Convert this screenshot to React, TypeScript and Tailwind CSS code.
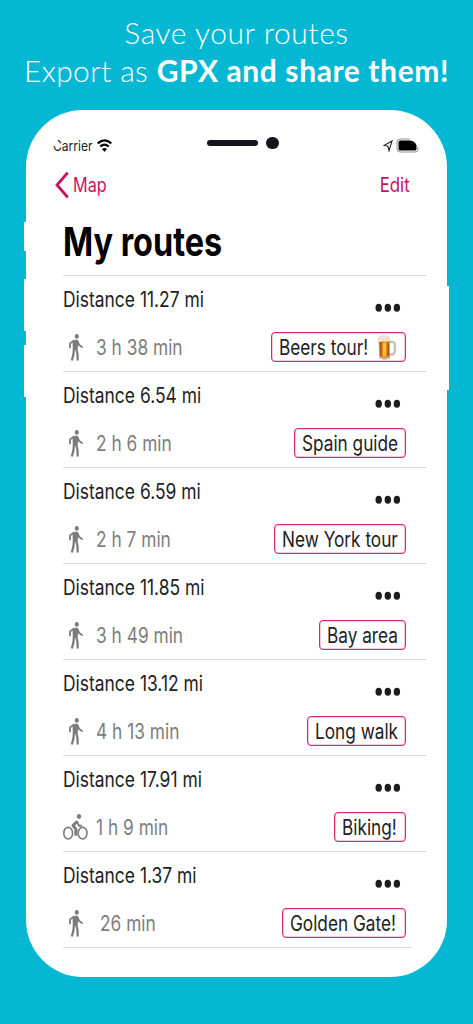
import { clsx } from 'clsx'

type Route = {
  distance: string
  time: string
  name: string
  mode: 'walk' | 'bike'
  timeClass: string
  tagWidth: string
}

const routes: Route[] = [
  { distance: '11.27', time: '3 h 38 min', name: 'Beers tour!', mode: 'walk', timeClass: 'ml-[33px]', tagWidth: 'w-[135px]' },
  { distance: '6.54', time: '2 h 6 min', name: 'Spain guide', mode: 'walk', timeClass: 'ml-[33px]', tagWidth: 'w-[112px]' },
  { distance: '6.59', time: '2 h 7 min', name: 'New York tour', mode: 'walk', timeClass: 'ml-[33px]', tagWidth: 'w-[132px]' },
  { distance: '11.85', time: '3 h 49 min', name: 'Bay area', mode: 'walk', timeClass: 'ml-[33px]', tagWidth: 'w-[87px]' },
  { distance: '13.12', time: '4 h 13 min', name: 'Long walk', mode: 'walk', timeClass: 'ml-[33px]', tagWidth: 'w-[99px]' },
  { distance: '17.91', time: '1 h 9 min', name: 'Biking!', mode: 'bike', timeClass: 'ml-[33px]', tagWidth: 'w-[72px]' },
  { distance: '1.37', time: '26 min', name: 'Golden Gate!', mode: 'walk', timeClass: 'ml-[37px]', tagWidth: 'w-[124px]' },
]

function WalkIcon() {
  return (
    <svg viewBox="0 0 15 27" className="ml-[5px] h-[27px] w-[15px] shrink-0">
      <ellipse cx="8.8" cy="2.4" rx="2.1" ry="2.3" fill="#7d7d7d" />
      <path d="M4.6 6.300 9 5.500l1.400 1.500-.7 8.500H4.800Z" fill="#7d7d7d" />
      <g fill="none" stroke="#7d7d7d" strokeLinejoin="round">
        <path d="M5.500 7 2.100 9.200l-.3 5" strokeWidth="1.800" />
        <path d="m9.300 7 1.900 4 3.400 2.600" strokeWidth="1.800" />
        <path d="m6 14.500-.6 6L3.900 26.500" strokeWidth="2.300" />
        <path d="m8 14.500 1.400 4.500.3 7.500" strokeWidth="2.300" />
      </g>
    </svg>
  )
}

function BikeIcon() {
  return (
    <svg viewBox="0 0 25 26" className="h-[26px] w-[25px] shrink-0">
      <g fill="none" stroke="#7d7d7d" strokeLinejoin="round">
        <ellipse cx="5.2" cy="19.2" rx="4.4" ry="5.8" strokeWidth="1.6" />
        <ellipse cx="19.6" cy="19.2" rx="4.4" ry="5.8" strokeWidth="1.6" />
        <path d="m14.300 7.200-4.300 4.300 3 3.900-.2 6.300" strokeWidth="3" />
        <path d="m14 7.600 2 4.200h3.200" strokeWidth="2" />
      </g>
      <ellipse cx="16" cy="2.5" rx="2.2" ry="2.4" fill="#7d7d7d" />
    </svg>
  )
}

function BeerIcon() {
  return (
    <svg viewBox="0 0 20 27" className="h-[27px] w-[20px] shrink-0">
      <path d="M12 8h3.500q2.500 0 2.300 3v6q0 3-3 3.500h-3" fill="none" stroke="#c9c3b6" strokeWidth="2.4" />
      <path d="M1.500 5h11l.5 18q-5 3-10.500 0Z" fill="#e18b16" />
      <path d="M3 8h1.500v14H3zM10.500 9H12v13h-1.500z" fill="#a65310" />
      <path d="M6 9h3v13H6z" fill="#ffc33b" />
      <path d="M2.300 22.500q5 2 10.600 0v1.800q-5 2.700-10.600 0Z" fill="#c6b597" />
      <path d="M.6 6Q-.2 2 3.500 2 6 0 9 1.500q4-.5 4.300 3.300 0 3-2.300 2.200L8 8Q5 6.600 3 8 1 8.500.6 6Z" fill="#ece3d4" />
    </svg>
  )
}

function StatusBar() {
  return (
    <div className="flex h-[20px] items-center">
      <div className="relative w-[44px] shrink-0 text-[14px] leading-[20px] text-[#222]">
        <span className="inline-block origin-left translate-y-px scale-x-[0.86]">Carrier</span>
        {/* rounded screen corner cuts into the label */}
        <span className="absolute -left-1 top-[3px] h-[8px] w-[9px] -rotate-12 bg-white" />
      </div>
      <svg viewBox="0 0 15 13" className="h-[13px] w-[15px]">
        <g fill="none" stroke="#000" strokeWidth="2.2">
          <path d="M.7 4.400Q7.500-1.600 14.300 4.400" />
          <path d="M3.200 7.500Q7.500 3.700 11.800 7.500" />
        </g>
        <path d="M5 10q2.500-2.200 5 0l-2.500 3Z" />
      </svg>
      <span className="ml-[95px] h-[6px] w-[51px] -translate-y-[2px] rounded-full bg-[#15151d]" />
      <span className="ml-[8px] size-[12.5px] -translate-y-[2px] rounded-full bg-[#15151d]" />
      <svg viewBox="0 0 10 12" className="ml-[104px] h-[12px] w-[10px] translate-y-px">
        <path d="M1 5.500 9 1 6 10.700 5 6.300Z" fill="none" stroke="#222" strokeWidth="1.1" />
      </svg>
      <svg viewBox="0 0 23 15" className="ml-[3px] h-[15px] w-[23px]">
        <path d="M14 1H4Q1 1 1 4v7q0 3 3 3h15q3 0 3-3V9" fill="none" stroke="#888" strokeWidth=".9" />
        <path d="M4 2.500h10q5 .5 6.500 5V11q0 1.500-2 1.500H4Q2.500 12.500 2.500 11V4Q2.500 2.500 4 2.500Z" />
      </svg>
    </div>
  )
}

function RouteRow({ route, last }: { route: Route; last: boolean }) {
  return (
    <li className="h-24">
      <div className="flex h-[95px] flex-col">
        <div className="flex h-[56px] justify-between">
          <span className="mt-[10px] h-7 origin-left scale-x-[0.83] whitespace-nowrap text-[21px] leading-7 text-[#222]">
            Distance {route.distance} mi
          </span>
          <button aria-label="More" className="mr-[25px] mt-[27px] h-[9px]">
            <svg viewBox="0 0 26 9" className="h-[9px] w-[26px] fill-[#1c1c1c]">
              <ellipse cx="3.7" cy="4.700" rx="3.200" ry="4" />
              <ellipse cx="12.800" cy="4.700" rx="3.200" ry="4" />
              <ellipse cx="21.900" cy="4.700" rx="3.200" ry="4" />
            </svg>
          </button>
        </div>
        <div className="flex h-[30px] items-center">
          <div className="flex w-0 items-center">
            {route.mode === 'walk' ? <WalkIcon /> : <BikeIcon />}
          </div>
          <span className={clsx('origin-left translate-y-px scale-x-[0.825] whitespace-nowrap text-[21px] leading-[30px] text-[#7d7d7d]', route.timeClass)}>
            {route.time}
          </span>
          <div className={clsx('ml-auto mr-[20px] flex h-[30px] shrink-0 items-center rounded-[4px] border border-[#d32873] pl-[7px] ring-[0.5px] ring-inset ring-[#d32873]/50', route.tagWidth)}>
            <span className="flex w-0 grow">
              <span className="origin-left translate-y-px scale-x-[0.82] whitespace-nowrap text-[21px] leading-[26px] text-[#222]">
                {route.name}
              </span>
            </span>
            {route.name === 'Beers tour!' && <span className="mr-[8px]"><BeerIcon /></span>}
          </div>
        </div>
      </div>
      <div className={clsx('h-px bg-[#d8d8d8]', last ? 'w-[349px]' : 'w-full')} />
    </li>
  )
}

export default function App() {
  return (
    <main className="h-[1024px] w-[473px] overflow-hidden bg-[#04b8d3] font-['Inter',sans-serif]">
      <header className="flex h-[110px] flex-col items-center pt-[13px] font-['Lato',sans-serif] text-[30px] leading-[38px] text-white">
        <p className="whitespace-nowrap font-light tracking-[0.55px]">Save your routes</p>
        <p className="whitespace-nowrap font-light tracking-[0.35px]">
          Export as <strong className="font-bold tracking-[0.6px]">GPX and share them!</strong>
        </p>
      </header>

      <div className="flex">
        <div className="flex w-[26px] flex-col items-end pt-[112px]">
          <span className="h-[29px] w-[2px] bg-white" />
          <span className="mt-[28px] h-[52px] w-[2px] bg-white" />
          <span className="mt-[14px] h-[52px] w-[2px] bg-white" />
        </div>

        <section className="h-[867px] w-[421px] rounded-[57px] bg-white pt-[25px]">
          <div className="pl-[27px]">
            <StatusBar />
          </div>
          <nav className="mt-[16px] flex h-[28px] items-center pl-[29px] pr-[37px] text-[20px] text-[#c6135f]">
            <svg viewBox="0 0 14 26" className="h-[26px] w-[14px]">
              <path d="M12 1.500 2 13l10 11.500" fill="none" stroke="currentColor" strokeWidth="2.8" strokeLinecap="round" />
            </svg>
            <span className="ml-[4px] origin-left scale-x-[0.81]">Map</span>
            <span className="ml-auto origin-right scale-x-[0.84]">Edit</span>
          </nav>
          <div className="ml-[37px] w-[363px]">
            <h1 className="flex h-[76px] items-center pt-[9px] text-[40px] font-bold leading-[48px] text-black">
              <span className="origin-left scale-x-[0.81] whitespace-nowrap">My routes</span>
            </h1>
            <div className="h-px bg-[#d8d8d8]" />
            <ul>
              {routes.map((route, i) => (
                <RouteRow key={route.name} route={route} last={i === routes.length - 1} />
              ))}
            </ul>
          </div>
        </section>

        <div className="w-[26px] pt-[176px]">
          <span className="block h-[104px] w-[2px] bg-white" />
        </div>
      </div>
    </main>
  )
}
